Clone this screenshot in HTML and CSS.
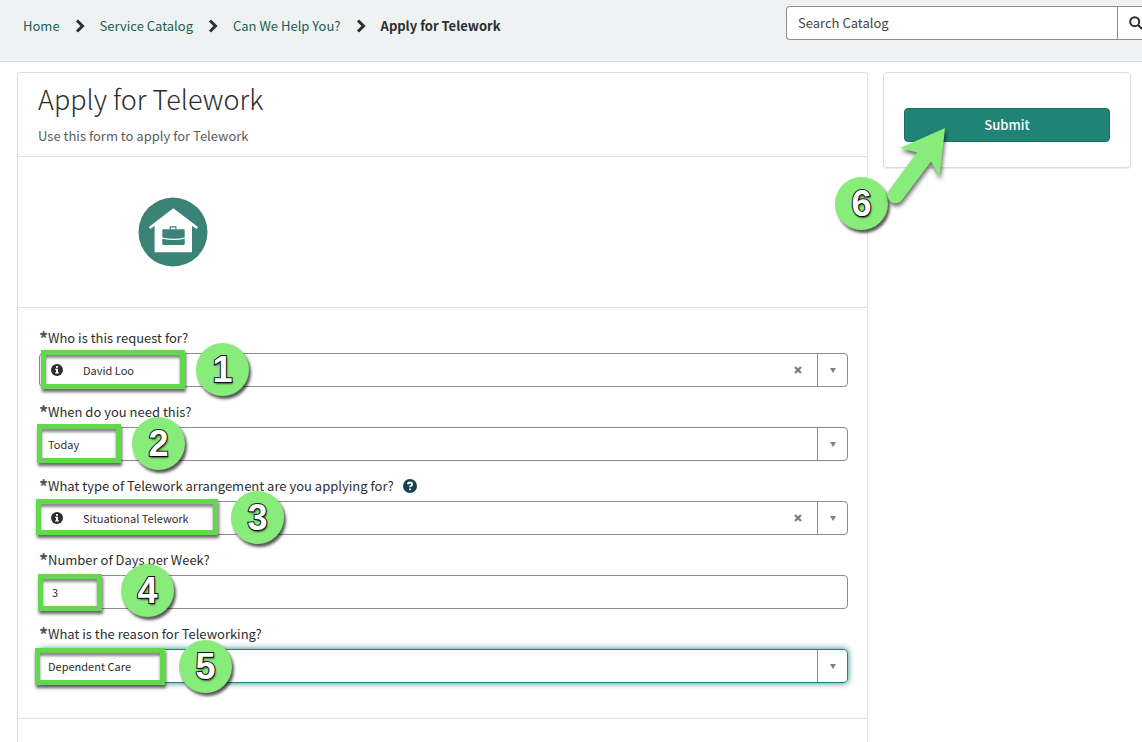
FILE: index.html
```html
<!DOCTYPE html>
<html lang="en">
<head>
<meta charset="utf-8">
<meta name="viewport" content="width=device-width, initial-scale=1">
<title>Apply for Telework</title>
<link rel="stylesheet" href="styles.css">
</head>
<body>
<header class="topbar">
  <nav class="crumbs" aria-label="Breadcrumb">
    <a href="#">Home</a>
    <svg class="chevron" viewBox="0 0 10 14" aria-hidden="true"><path d="M2 1.500 7.500 7 2 12.500"/></svg>
    <a href="#">Service Catalog</a>
    <svg class="chevron" viewBox="0 0 10 14" aria-hidden="true"><path d="M2 1.500 7.500 7 2 12.500"/></svg>
    <a href="#">Can We Help You?</a>
    <svg class="chevron" viewBox="0 0 10 14" aria-hidden="true"><path d="M2 1.500 7.500 7 2 12.500"/></svg>
    <span class="current" aria-current="page">Apply for Telework</span>
  </nav>
  <form class="search">
    <input type="search" placeholder="Search Catalog" aria-label="Search Catalog">
    <button type="button" aria-label="Search">
      <svg viewBox="0 0 14 14" aria-hidden="true"><circle cx="5.7" cy="5.7" r="4.5"/><path d="M9 9l4 4"/></svg>
    </button>
  </form>
</header>
<div class="page">
  <main class="card item">
    <div class="item-head">
      <h1>Apply for Telework</h1>
      <p>Use this form to apply for Telework</p>
    </div>
    <div class="item-picture">
      <svg viewBox="0 0 70 70" role="img" aria-label="Telework">
        <circle cx="35" cy="35" r="34.5" fill="#3b8277"/>
        <path fill="#fff" d="M35.3 11.2 60 30l-1.6 2-4.4-3.2v26.5H16.6V28.800l-4.200 3.200-1.600-2z"/>
        <path fill="none" stroke="#3b8277" stroke-width="1.200" d="M32.300 32.500v-2.700h5.600v2.700"/>
        <path fill="#3b8277" d="M25.300 32.300h20.400q1 0 1 1v7.200q-11.200 2.600-22.400 0v-7.200q0-1 1-1zM24.300 41.700q11.200 2.600 22.400 0v5.300q0 1-1 1H25.300q-1 0-1-1z"/>
      </svg>
    </div>
    <form class="fields">
      <div class="field">
        <label for="who"><b>*</b>Who is this request for?</label>
        <div class="control">
          <svg class="info" viewBox="0 0 12 12" aria-hidden="true"><circle cx="6" cy="6" r="6"/><path d="M5 2h2v1.700H5zM4.200 4.800H7v3.500h.8v1.300H4.200V8.300H5V6h-.8z"/></svg>
          <select id="who"><option>David Loo</option></select>
          <button class="clear" type="button" aria-label="Clear"><svg viewBox="0 0 8 8"><path d="M1 1l6 6M7 1L1 7"/></svg></button>
          <span class="arrow"></span>
        </div>
        <span class="mark mark-1"></span><span class="badge badge-1">1</span>
      </div>
      <div class="field">
        <label for="when"><b>*</b>When do you need this?</label>
        <div class="control">
          <select id="when"><option>Today</option></select>
          <span class="arrow"></span>
        </div>
        <span class="mark mark-2"></span><span class="badge badge-2">2</span>
      </div>
      <div class="field">
        <label for="type"><b>*</b>What type of Telework arrangement are you applying for?
          <svg class="help" viewBox="0 0 14 14" aria-hidden="true"><circle cx="7" cy="7" r="7"/><path d="M4.900 5.300Q5 3.500 7 3.500t2.100 1.700Q9.100 6.300 7.900 6.900 7 7.400 7 8.300M7 9.400v1.900"/></svg></label>
        <div class="control">
          <svg class="info" viewBox="0 0 12 12" aria-hidden="true"><circle cx="6" cy="6" r="6"/><path d="M5 2h2v1.700H5zM4.200 4.800H7v3.500h.8v1.300H4.200V8.300H5V6h-.8z"/></svg>
          <select id="type"><option>Situational Telework</option></select>
          <button class="clear" type="button" aria-label="Clear"><svg viewBox="0 0 8 8"><path d="M1 1l6 6M7 1L1 7"/></svg></button>
          <span class="arrow"></span>
        </div>
        <span class="mark mark-3"></span><span class="badge badge-3">3</span>
      </div>
      <div class="field">
        <label for="days"><b>*</b>Number of Days per Week?</label>
        <div class="control">
          <input id="days" type="text" value="3">
        </div>
        <span class="mark mark-4"></span><span class="badge badge-4">4</span>
      </div>
      <div class="field">
        <label for="reason"><b>*</b>What is the reason for Teleworking?</label>
        <div class="control active">
          <select id="reason"><option>Dependent Care</option></select>
          <span class="arrow"></span>
        </div>
        <span class="mark mark-5"></span><span class="badge badge-5">5</span>
      </div>
    </form>
  </main>
  <aside class="card order">
    <button class="submit" type="submit">Submit</button>
    <svg class="pointer" viewBox="0 0 65 90" aria-hidden="true"><path d="M60 8 15 28l17 4.500L4 70.500A8 8 0 0 0 17 80L46 41.500 54.500 57z"/></svg>
    <span class="badge badge-6">6</span>
  </aside>
</div>
</body>
</html>
```
FILE: styles.css
```css
* { box-sizing: border-box; }

body {
  margin: 0;
  min-height: 100vh;
  display: flex;
  flex-direction: column;
  background: #fff;
  color: #2e2e2e;
  font: 13px/20px "Noto Sans CJK SC", "Open Sans", sans-serif;
}

input, select, button { font: inherit; color: inherit; }

.topbar {
  display: grid;
  grid-template-columns: 1fr 356px;
  height: 62px;
  padding-top: 6px;
  background: #eef2f3;
  border-bottom: 1px solid #dadddf;
  overflow: hidden;
}

.crumbs {
  display: flex;
  align-items: center;
  gap: 15px;
  height: 40px;
  padding-left: 23px;
}
.crumbs a { color: #1b5e50; text-decoration: none; }
.current { font-weight: 700; }
.chevron { width: 10px; height: 14px; fill: none; stroke: #2e2e2e; stroke-width: 3; }

.search {
  display: flex;
  height: 34px;
  background: #fff;
  border: 1px solid #8c8c8c;
  border-right: 0;
  border-radius: 4px 0 0 4px;
  overflow: hidden;
}
.search input {
  flex: 1;
  min-width: 0;
  padding: 0 11px;
  border: 0;
  background: none;
  outline: 0;
}
.search input::placeholder { color: #444; opacity: 1; }
.search button {
  width: 25px;
  padding: 0 0 0 11px;
  border: 0;
  border-left: 1px solid #8c8c8c;
  background: none;
  overflow: hidden;
}
.search svg { display: block; width: 14px; height: 14px; fill: none; stroke: #2e2e2e; stroke-width: 2; }

.page {
  flex: 1;
  display: flex;
  align-items: flex-start;
  gap: 15px;
  padding: 10px 11px 0 17px;
}
.card { border: 1px solid #dadddf; border-radius: 4px; }

.item {
  flex: 1;
  align-self: stretch;
  border-bottom: 0;
  border-radius: 4px 4px 0 0;
}
.item-head { padding: 8px 20px 10px; border-bottom: 1px solid #dae4e6; }
.item-head h1 { margin: 0 0 9px; font-size: 27px; line-height: 36px; font-weight: 300; }
.item-head p { margin: 0; color: #5c5c5c; }
.item-picture { height: 151px; padding: 40px 120px; border-bottom: 1px solid #dae4e6; }
.item-picture svg { display: block; width: 70px; height: 70px; }

.fields {
  display: grid;
  gap: 15px;
  padding: 20px 19px 35px 21px;
  border-bottom: 1px solid #dae4e6;
}
.field { position: relative; display: grid; gap: 5px; }
.field label { display: flex; align-items: center; height: 20px; }
.field label b { align-self: flex-start; width: 9px; font-size: 18px; line-height: 20px; color: #555; }
.help { width: 14px; height: 14px; margin-left: 9px; fill: #17414a; }
.help path { fill: none; stroke: #fff; stroke-width: 2; }

.control {
  display: flex;
  align-items: center;
  height: 34px;
  border: 1px solid #8c8c8c;
  border-radius: 4px;
  font-size: 11px;
}
.control select, .control input {
  flex: 1;
  min-width: 0;
  height: 32px;
  padding: 0 8px;
  border: 0;
  background: none;
  outline: 0;
  appearance: none;
}
.control input { padding-left: 12px; }
.info { width: 12px; height: 12px; margin: 0 12px 0 11px; fill: #2e2e2e; }
.info path { fill: #fff; }
.clear { padding: 0 15px; border: 0; background: none; }
.clear svg { display: block; width: 8px; height: 8px; stroke: #808080; stroke-width: 2.400; }
.arrow {
  display: grid;
  place-items: center;
  width: 30px;
  height: 32px;
  border-left: 1px solid #8c8c8c;
}
.arrow::before {
  content: "";
  border: 3px solid transparent;
  border-top: 5px solid #808080;
  border-bottom: 0;
}
.active { border-color: #1f8476; box-shadow: 0 0 6px #1f8476; }

.order { position: relative; width: 248px; padding: 35px 20px 25px; box-shadow: 0 1px 1px #e8ecec; }
.submit {
  display: block;
  width: 100%;
  height: 34px;
  border: 1px solid #1a6e62;
  border-radius: 4px;
  background: #1f8476;
  color: #fff;
  font-weight: 500;
}

/* Numbered walkthrough callouts laid over the form */
.mark, .badge, .pointer { position: absolute; pointer-events: none; }
.mark {
  border: 5px solid #62d84e;
  box-shadow: 1px 3px 3px #0009, inset 0 3px 3px #0007;
}
.badge {
  z-index: 1;
  width: 53px;
  height: 53px;
  border-radius: 50%;
  background: #88ec7b;
  box-shadow: 2px 3px 3px #000a;
  color: #fff;
  font: 700 36px/53px "Liberation Sans", Arial, sans-serif;
  text-align: center;
  -webkit-text-stroke: 2px #111;
  paint-order: stroke fill;
  text-shadow: 1px 2px 2px #0009;
}
.mark-1 { left: 2px; top: 22px; width: 144px; height: 39px; }
.mark-2 { left: -2px; top: 22px; width: 84px; height: 39px; }
.mark-3 { left: -3px; top: 23px; width: 182px; height: 36px; }
.mark-4 { left: -1px; top: 24px; width: 64px; height: 37px; }
.mark-5 { left: -4px; top: 24px; width: 130px; height: 37px; }
.badge-1 { left: 157px; top: 15px; }
.badge-2 { left: 93px; top: 15px; }
.badge-3 { left: 192px; top: 15px; }
.badge-4 { left: 82px; top: 14px; }
.badge-5 { left: 140px; top: 16px; }
.badge-6 { left: -49px; top: 104px; }
.pointer {
  left: 1px;
  top: 47px;
  width: 65px;
  height: 90px;
  z-index: 2;
  fill: #88ec7b;
  filter: drop-shadow(1px 3px 2px #0009);
}
```
